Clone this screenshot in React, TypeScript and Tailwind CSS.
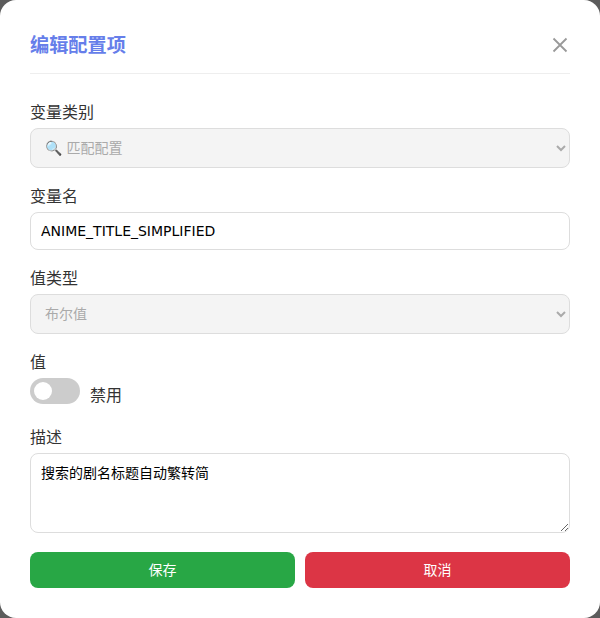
import React from 'react';

const FONT = "font-['DejaVu_Sans','Noto_Sans_CJK_SC',sans-serif]";

function Field({ label, children }: { label: string; children: React.ReactNode }) {
  return (
    <div className="mb-[18px]">
      <label className="block mb-[5px] h-[21px] text-base leading-[21px] text-[#333]">{label}</label>
      {children}
    </div>
  );
}

function DisabledSelect({ value }: { value: string }) {
  return (
    <select
      disabled
      value={value}
      className={`block w-full h-10 px-[10px] text-sm bg-[#f4f4f4] text-[#aaa] border border-[#ddd] rounded-lg ${FONT}`}
    >
      <option value={value}>{value}</option>
    </select>
  );
}

export default function App() {
  return (
    <div className={`w-[600px] h-[618px] bg-[#5c5c5c] overflow-hidden ${FONT}`}>
      <div className="h-full bg-white rounded-2xl px-[30px] pt-[30px]">
        <div className="flex items-center justify-between h-[44px] border-b border-[#eee] pb-[13px] mb-[28px]">
          <h3 className="text-[19.2px] leading-[35px] font-bold text-[#667eea]">编辑配置项</h3>
          <svg width="20" height="20" viewBox="0 0 20 20" className="text-[#999]">
            <path d="M3.5 3.5 L16.5 16.5 M16.5 3.5 L3.5 16.5" stroke="currentColor" strokeWidth="1.8" fill="none" />
          </svg>
        </div>

        <Field label="变量类别">
          <DisabledSelect value="🔍 匹配配置" />
        </Field>

        <Field label="变量名">
          <input
            readOnly
            value="ANIME_TITLE_SIMPLIFIED"
            className={`block w-full h-[38px] px-[10px] text-sm text-black bg-white border border-[#ddd] rounded-lg outline-none ${FONT}`}
          />
        </Field>

        <Field label="值类型">
          <DisabledSelect value="布尔值" />
        </Field>

        <div className="mb-5">
          <label className="block mb-[5px] h-[21px] text-base leading-[21px] text-[#333]">值</label>
          <div className="flex items-start h-[29px]">
            <span className="relative inline-block w-[50px] h-[26px] rounded-full bg-[#ccc]">
              <span className="absolute left-1 top-1 w-[18px] h-[18px] rounded-full bg-white" />
            </span>
            <span className="ml-[10px] mt-[7px] text-base leading-[21px] text-[#333]">禁用</span>
          </div>
        </div>

        <Field label="描述">
          <textarea
            readOnly
            value="搜索的剧名标题自动繁转简"
            className={`block w-full h-20 px-[10px] py-[9px] text-sm text-black bg-white border border-[#ddd] rounded-lg outline-none ${FONT}`}
          />
        </Field>

        <div className="flex gap-[10px] mt-[19px]">
          <button className={`flex-1 h-9 rounded-lg bg-[#28a745] text-white text-sm ${FONT}`}>保存</button>
          <button className={`flex-1 h-9 rounded-lg bg-[#dc3545] text-white text-sm ${FONT}`}>取消</button>
        </div>
      </div>
    </div>
  );
}
